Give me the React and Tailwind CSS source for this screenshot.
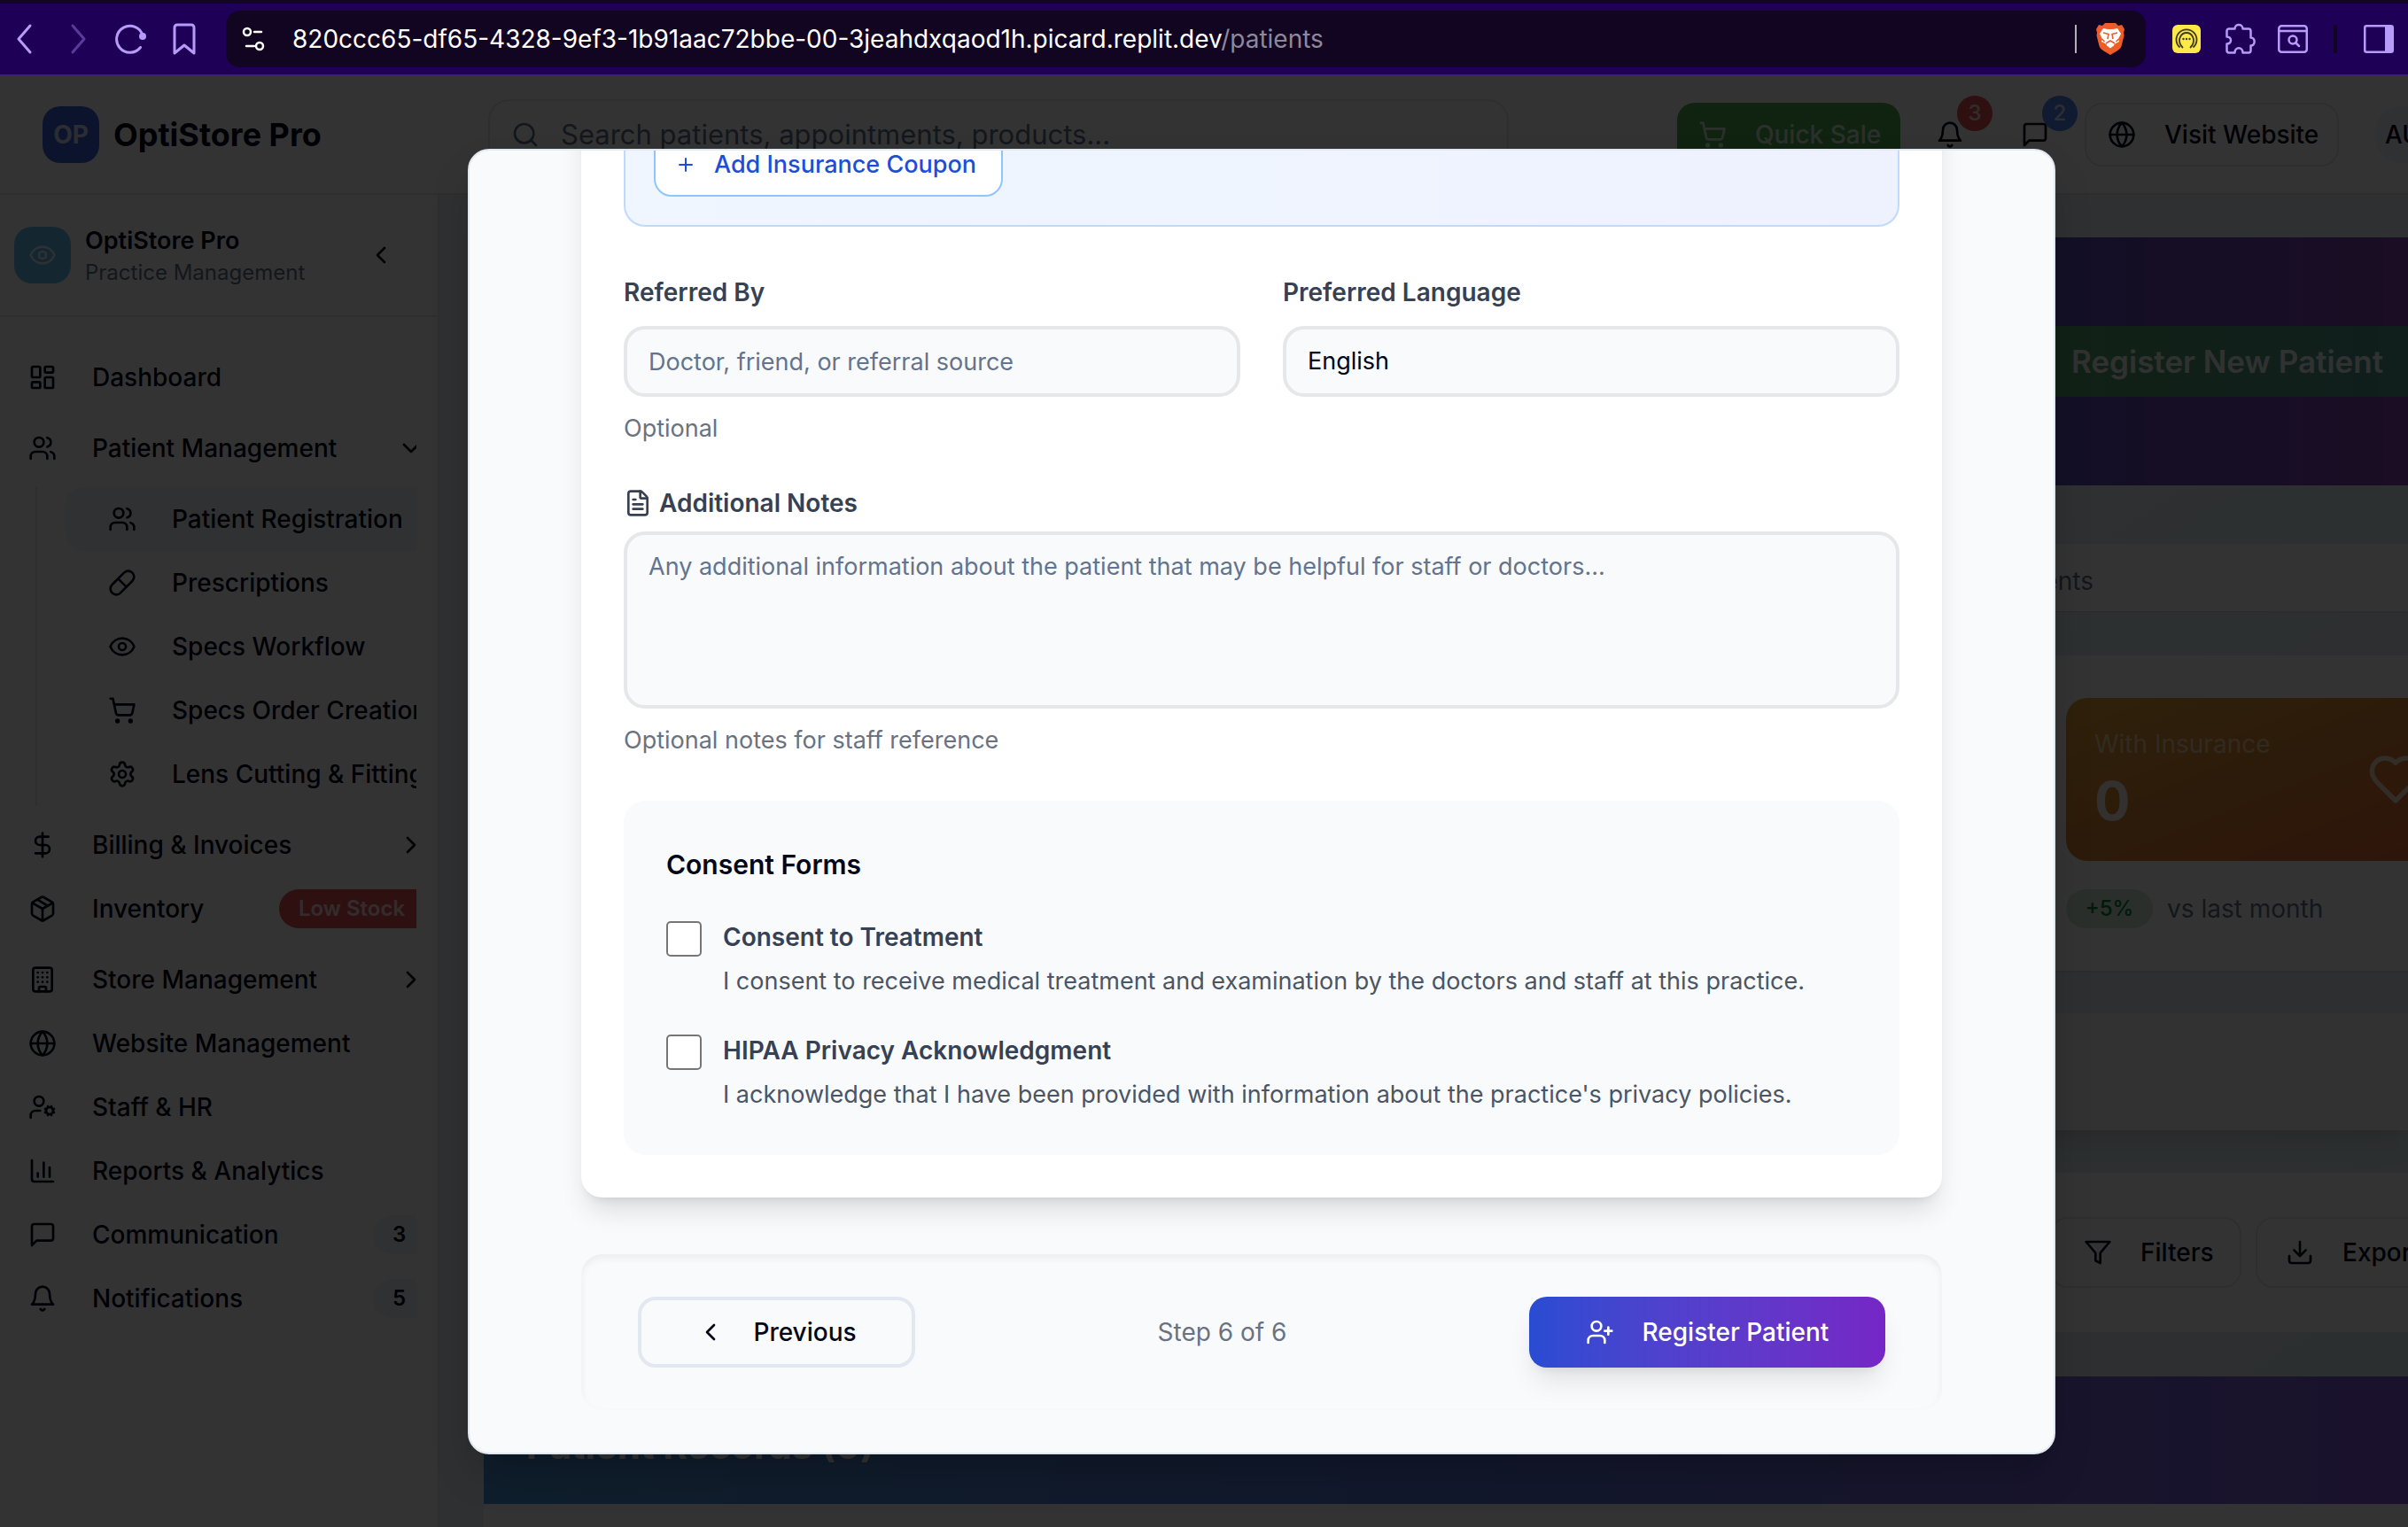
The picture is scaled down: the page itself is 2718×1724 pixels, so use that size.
import React from "react";
import {
  LayoutDashboard, Pill, Eye, ShoppingCart, Settings, DollarSign, Package, Building, Globe, UserCog,
  ChartColumn, ChevronLeft, ChevronRight, ChevronDown, Search, Plus, FileText, UserPlus,
} from "lucide-react";

function Svg({ className = "size-8", children, sw = 2 }) {
  return (
    <svg viewBox="0 0 24 24" fill="none" stroke="currentColor" strokeWidth={sw} strokeLinecap="round" strokeLinejoin="round" className={className} aria-hidden="true">
      {children}
    </svg>
  );
}
const Users = ({ className }) => (
  <Svg className={className}>
    <path d="M16 21v-2a4 4 0 0 0-4-4H6a4 4 0 0 0-4 4v2" />
    <circle cx="9" cy="7" r="4" />
    <path d="M22 21v-2a4 4 0 0 0-3-3.87" />
    <path d="M16 3.13a4 4 0 0 1 0 7.75" />
  </Svg>
);
const Bell = ({ className }) => (
  <Svg className={className}>
    <path d="M6 8a6 6 0 0 1 12 0c0 7 3 9 3 9H3s3-2 3-9" />
    <path d="M10.3 21a1.94 1.94 0 0 0 3.4 0" />
  </Svg>
);
const Message = ({ className }) => (
  <Svg className={className}>
    <path d="M21 15a2 2 0 0 1-2 2H7l-4 4V5a2 2 0 0 1 2-2h14a2 2 0 0 1 2 2z" />
  </Svg>
);
const Filter = ({ className }) => (
  <Svg className={className}>
    <polygon points="22 3 2 3 10 12.46 10 19 14 21 14 12.46 22 3" />
  </Svg>
);
const Download = ({ className }) => (
  <Svg className={className}>
    <path d="M21 15v4a2 2 0 0 1-2 2H5a2 2 0 0 1-2-2v-4" />
    <polyline points="7 10 12 15 17 10" />
    <line x1="12" x2="12" y1="15" y2="3" />
  </Svg>
);
const Heart = ({ className }) => (
  <Svg className={className}>
    <path d="M19 14c1.49-1.46 3-3.21 3-5.5A5.5 5.5 0 0 0 16.5 3c-1.76 0-3 .5-4.5 2-1.5-1.5-2.74-2-4.5-2A5.5 5.5 0 0 0 2 8.5c0 2.3 1.5 4.05 3 5.5l7 7Z" />
  </Svg>
);

function BrowserBar() {
  return (
    <div className="flex h-[86px] shrink-0 items-center border-t-4 border-b-2 border-t-[#110522] border-b-[#3f1d80] bg-[#1f0057] text-[#b69cf8]">
      <div className="flex w-[255px] shrink-0 items-center pl-3">
        <button aria-label="Back" className="w-[60px]">
          <svg viewBox="0 0 32 36" className="h-9 w-8" fill="none" stroke="currentColor" strokeWidth="3" strokeLinecap="round" strokeLinejoin="round"><path d="M22 3 9 18l13 15" /></svg>
        </button>
        <button aria-label="Forward" className="w-[58px] text-[#5b3a99]">
          <svg viewBox="0 0 32 36" className="h-9 w-8" fill="none" stroke="currentColor" strokeWidth="3" strokeLinecap="round" strokeLinejoin="round"><path d="M10 3 23 18 10 33" /></svg>
        </button>
        <button aria-label="Reload" className="w-16">
          <svg viewBox="0 0 36 36" className="size-9" fill="none" stroke="currentColor" strokeWidth="3" strokeLinecap="round"><path d="M28.500 27.500A15 15 0 1 1 31 14" /><circle cx="31" cy="15" r="4" fill="currentColor" stroke="none" /></svg>
        </button>
        <button aria-label="Bookmark">
          <svg viewBox="0 0 28 36" className="h-9 w-7" fill="none" stroke="currentColor" strokeWidth="3" strokeLinejoin="round"><path d="M3 5a3 3 0 0 1 3-3h16a3 3 0 0 1 3 3v29L14 25 3 34z" /></svg>
        </button>
      </div>
      <div className="flex h-16 min-w-0 flex-1 items-center rounded-2xl bg-[#110522] pr-6 pl-[18px] text-white">
        <svg viewBox="0 0 28 28" className="size-7 shrink-0" fill="none" stroke="currentColor" strokeWidth="2.5" strokeLinecap="round"><circle cx="6" cy="6" r="4" /><path d="M14 6h8M5 22h9" /><circle cx="20" cy="22" r="4" /></svg>
        <div className="ml-[29px] flex-1 text-[28px] whitespace-nowrap">
          820ccc65-df65-4328-9ef3-1b91aac72bbe-00-3jeahdxqaod1h.picard.replit.dev<span className="text-[#8f8899]">/patients</span>
        </div>
        <div className="mr-[22px] h-8 w-0.5 bg-[#b4b0ba]" />
        <svg viewBox="0 0 32 36" className="h-9 w-8 shrink-0">
          <path d="M10 0h12l3 3 4-1 3 5-1 4 .5 3-3 12c-1 3-3 4-5 5.500L16 36l-7.500-4.500c-2-1.500-4-2.500-5-5.500L.5 14 1 11 0 7l3-5 4 1z" fill="#ee5c28" />
          <path d="M8 6l5 1h6l5-1 4 6-3 6 1 3-4 2-6 5-6-5-4-2 1-3-3-6z" fill="#fff" />
          <path d="M8 11l6 1.500L13 18M24 11l-6 1.500L19 18M6.500 18l3 3M25.500 18l-3 3M11 23l5-3 5 3" stroke="#ee5c28" strokeWidth="1.600" fill="none" />
          <path d="M11.500 25l4.500-2.500 4.500 2.500-4.500 3.500z" fill="#fff" />
        </svg>
      </div>
      <div className="flex w-[296px] shrink-0 items-center overflow-hidden pl-[30px]">
        <svg viewBox="0 0 32 32" className="mr-[27px] size-8 shrink-0"><rect width="32" height="32" rx="6" fill="#fde94a" /><path d="M8.500 25.500A11.500 11.500 0 1 1 23.500 25.500M12 26C7 22 7.500 16 9 13.500 12 7.500 20 7.500 23 13.500 24.500 16 25 22 20 26" stroke="#3c3a20" strokeWidth="1.800" fill="none" /><g fill="#3c3a20"><circle cx="12.500" cy="16" r="1.200" /><circle cx="16" cy="16" r="1.200" /><circle cx="19.500" cy="16" r="1.200" /></g></svg>
        <svg viewBox="0 0 36 36" className="mr-6 size-9 shrink-0" fill="none" stroke="currentColor" strokeWidth="2.5" strokeLinejoin="round"><path d="M5 6.500h6.500c0-6 9-6 9 0H27a2.500 2.500 0 0 1 2.500 2.500v7.500c5.500 0 5.500 9 0 9V31a2.500 2.500 0 0 1-2.500 2.500h-6.500c0-7-9-7-9 0H5A2.500 2.500 0 0 1 2.500 31v-7.500c6 0 6-8 0-8V9A2.500 2.500 0 0 1 5 6.500z" /></svg>
        <svg viewBox="0 0 34 32" className="mr-[29px] h-8 w-[34px] shrink-0" fill="none" stroke="currentColor" strokeWidth="2.5"><rect x="1.250" y="1.250" width="31.500" height="29.500" rx="3" /><path d="M2 7h30" /><circle cx="17" cy="17" r="4.500" /><path d="M20 20l4 4" strokeLinecap="round" /></svg>
        <div className="mr-[30px] h-8 w-1 shrink-0 bg-[#110522]" />
        <svg viewBox="0 0 34 32" className="h-8 w-[34px] shrink-0" fill="none" stroke="currentColor" strokeWidth="2.5"><rect x="1.250" y="1.250" width="31.500" height="29.500" rx="2" /><path d="M24 2h8v28h-8z" fill="currentColor" stroke="none" /></svg>
        <div className="ml-4 h-16 w-2 shrink-0 rounded-l-lg bg-[#3f1d80]" />
      </div>
    </div>
  );
}

function TopHeader() {
  return (
    <header className="-mr-[26px] flex h-[134px] shrink-0 items-center border-b-2 border-gray-200 bg-white pl-12">
      <div className="flex w-[503px] shrink-0 items-center gap-4">
        <div className="grid size-16 place-items-center rounded-[20px] bg-[#3764dc] text-[28px] font-bold text-white/80">OP</div>
        <div className="text-[36px] font-bold text-slate-950">OptiStore Pro</div>
      </div>
      <label className="mr-[190px] flex h-20 min-w-0 flex-1 items-center gap-6 rounded-3xl border-2 border-gray-200 px-6 text-gray-500">
        <Search className="size-8 shrink-0 text-slate-500" />
        <input aria-label="Search" placeholder="Search patients, appointments, products..." className="w-full bg-transparent text-[31px] placeholder:text-slate-500" />
      </label>
      <div className="flex shrink-0 items-center text-[28px] font-medium text-slate-950">
        <button className="flex h-[72px] w-[252px] items-center gap-8 rounded-[20px] bg-[#4caf50] pl-6 whitespace-nowrap text-white/80">
          <ShoppingCart className="size-8 shrink-0" />Quick Sale
        </button>
        <button aria-label="Alerts" className="relative ml-10"><Bell className="size-8" />
          <span className="absolute -top-7 left-6 grid size-10 place-items-center rounded-full bg-[#e65055] text-2xl text-white/80">3</span>
        </button>
        <button aria-label="Messages" className="relative ml-16"><Message className="size-8" />
          <span className="absolute -top-7 left-6 grid size-10 place-items-center rounded-full bg-[#5082f0] text-2xl text-white/80">2</span>
        </button>
        <button className="ml-10 flex h-[72px] w-[287px] items-center gap-8 rounded-[20px] border-2 border-gray-200 pl-6 whitespace-nowrap">
          <Globe className="size-8 shrink-0" />Visit Website
        </button>
        <div className="ml-10 grid size-16 place-items-center rounded-full bg-slate-100">AU</div>
      </div>
    </header>
  );
}

function NavItem({ icon: Icon, label, end, badge, danger, space }) {
  return (
    <a href="#nav" className={"flex h-[72px] shrink-0 items-center pl-8 text-[28px] font-medium whitespace-nowrap " + (space ? "mb-2" : "")}>
      <Icon className="size-8 shrink-0" />
      <span className="ml-10 flex-1">{label}</span>
      {end && React.createElement(end, { className: "-mr-[10px] size-8 shrink-0" })}
      {badge && (
        <span className={"flex h-11 shrink-0 items-center rounded-l-full text-2xl font-semibold " + (danger ? "w-[155px] bg-[#e65055] pl-[22px] text-white/80" : "w-[49px] bg-slate-100 pl-[22px]")}>{badge}</span>
      )}
    </a>
  );
}
function SubItem({ icon: Icon, label, active }) {
  return (
    <a href="#nav" className={"flex h-[72px] items-center rounded-l-[20px] pl-12 text-[28px] font-medium whitespace-nowrap " + (active ? "bg-slate-100" : "")}>
      <Icon className="size-8 shrink-0" />
      <span className="ml-10">{label}</span>
    </a>
  );
}

function Sidebar() {
  return (
    <aside className="flex w-[496px] shrink-0 flex-col border-r-2 border-gray-200 bg-white text-slate-950">
      <div className="flex h-[138px] shrink-0 items-center border-b-2 border-gray-200 pl-4">
        <div className="grid size-16 place-items-center rounded-[20px] bg-[#64bef0] text-white/80"><Eye className="size-8" /></div>
        <div className="ml-4 flex-1 pt-1">
          <div className="text-[27px] leading-9 font-semibold">OptiStore Pro</div>
          <div className="text-2xl leading-9 text-slate-500">Practice Management</div>
        </div>
        <button aria-label="Collapse" className="mr-12"><ChevronLeft className="size-8" /></button>
      </div>
      <nav className="mr-6 flex flex-col overflow-hidden pt-8">
        <NavItem icon={LayoutDashboard} label="Dashboard" space />
        <NavItem icon={Users} label="Patient Management" end={ChevronDown} space />
        <div className="mb-2 ml-10 border-l-2 border-gray-200 pl-8">
          <SubItem icon={Users} label="Patient Registration" active />
          <SubItem icon={Pill} label="Prescriptions" />
          <SubItem icon={Eye} label="Specs Workflow" />
          <SubItem icon={ShoppingCart} label="Specs Order Creation" />
          <SubItem icon={Settings} label="Lens Cutting & Fitting" />
        </div>
        <NavItem icon={DollarSign} label="Billing & Invoices" end={ChevronRight} />
        <NavItem icon={Package} label="Inventory" badge="Low Stock" danger space />
        <NavItem icon={Building} label="Store Management" end={ChevronRight} />
        <NavItem icon={Globe} label="Website Management" />
        <NavItem icon={UserCog} label="Staff & HR" />
        <NavItem icon={ChartColumn} label="Reports & Analytics" />
        <NavItem icon={Message} label="Communication" badge="3" />
        <NavItem icon={Bell} label="Notifications" badge="5" />
      </nav>
    </aside>
  );
}

function PageContent() {
  return (
    <main className="min-w-0 flex-1 overflow-hidden bg-gradient-to-br from-[#ebf0fa] to-[#dcebf0] pt-12 pl-[50px] text-[28px]">
      <section className="flex h-[280px] items-center justify-end bg-gradient-to-r from-blue-600 via-[#5a4bbe] via-80% to-[#8241b4]">
        <button className="h-20 w-[420px] bg-gradient-to-r from-[#55a569] to-[#50968c] pl-10 text-left text-[35px] font-semibold whitespace-nowrap text-white/90">Register New Patient</button>
      </section>
      <div className="mt-[66px] flex h-[76px] items-center justify-end bg-white pt-2 pr-[355px] text-slate-500 shadow-sm">Patients</div>
      <section className="mt-[50px] flex h-[356px] flex-col items-end bg-white pt-12 shadow-sm">
        <div className="w-[386px]">
          <div className="flex h-[184px] w-[462px] items-center justify-between rounded-3xl bg-gradient-to-br from-[#e6a53c] via-[#dc8232] to-[#e66432] pr-[58px] pl-8">
            <div>
              <div className="leading-10 text-orange-100/70">With Insurance</div>
              <div className="mt-2 text-[60px] leading-[72px] font-bold text-white/90">0</div>
            </div>
            <Heart className="size-16 text-orange-100/90" />
          </div>
          <div className="mt-8 flex items-center gap-4 whitespace-nowrap text-slate-500">
            <span className="grid h-11 w-[98px] place-items-center rounded-full bg-[#d2ebdc] text-2xl font-medium text-green-700">+5%</span>
            vs last month
          </div>
        </div>
      </section>
      <section className="mt-12 h-[132px] bg-[#fafafc] shadow-[0_20px_30px_-6px_rgba(0,0,0,0.1),0_8px_12px_-8px_rgba(0,0,0,0.1)]" />
      <section className="mt-12 flex h-[180px] items-center justify-end bg-white text-slate-950">
        <div className="flex w-[404px] shrink-0 gap-4 font-medium">
          <button className="flex h-20 w-[216px] shrink-0 items-center gap-8 rounded-[20px] border-2 border-gray-200 pl-9"><Filter className="size-8" />Filters</button>
          <button className="flex h-20 w-[216px] shrink-0 items-center gap-8 rounded-[20px] border-2 border-gray-200 pl-8"><Download className="size-8" />Export</button>
        </div>
      </section>
      <section className="mt-[50px] bg-white">
        <h2 className="h-36 bg-gradient-to-r from-[#4b96dc] via-[#5a78dc] to-[#825adc] pt-12 pl-12 text-[42px] leading-[60px] font-bold text-white">Patient Records (0)</h2>
        <div className="h-12" />
      </section>
    </main>
  );
}

function Consent({ id, title, text }) {
  return (
    <div className="flex gap-6">
      <input id={id} type="checkbox" className="size-10 shrink-0 appearance-none rounded-[5px] border-2 border-[#767676] bg-white" />
      <div>
        <label htmlFor={id} className="block text-[28px] leading-9 font-semibold text-gray-700">{title}</label>
        <p className="mt-3 text-[27px] leading-10 text-gray-600">{text}</p>
      </div>
    </div>
  );
}

function RegistrationDialog() {
  const field = "block w-full rounded-3xl border-4 border-gray-200 bg-gray-50 px-6 text-[27px]";
  return (
    <div role="dialog" aria-label="Register patient" className="flex min-w-0 flex-1 flex-col justify-end overflow-hidden rounded-3xl border-2 border-slate-200 bg-slate-50 px-[126px] pb-12 text-[28px] text-slate-950 shadow-2xl">
      <div className="rounded-3xl bg-white p-12 shadow-[0_20px_30px_-6px_rgba(0,0,0,0.12),0_8px_12px_-8px_rgba(0,0,0,0.12)]">
        <div className="rounded-3xl border-2 border-blue-200 bg-gradient-to-r from-blue-50 to-indigo-50 px-8 pt-20 pb-8">
          <button className="flex h-[72px] w-[394px] items-center gap-5 rounded-[20px] border-2 border-blue-300 bg-white pl-[22px] text-[27px] font-medium whitespace-nowrap text-[#1d4ed8]"><Plus className="size-6 shrink-0" />Add Insurance Coupon</button>
        </div>
        <div className="mt-14 grid grid-cols-2 gap-12">
          <div>
            <label htmlFor="ref" className="block leading-9 font-semibold text-gray-700">Referred By</label>
            <input id="ref" placeholder="Doctor, friend, or referral source" className={field + " mt-5 h-20 placeholder:text-slate-500"} />
            <p className="mt-4 text-[27px] leading-10 text-gray-500">Optional</p>
          </div>
          <div>
            <label htmlFor="lang" className="block leading-9 font-semibold text-gray-700">Preferred Language</label>
            <select id="lang" className={field + " mt-5 h-20 appearance-none"}><option>English</option></select>
          </div>
        </div>
        <label htmlFor="notes" className="mt-12 flex items-center gap-2 leading-8 font-semibold text-gray-700"><FileText className="size-8" />Additional Notes</label>
        <textarea id="notes" placeholder="Any additional information about the patient that may be helpful for staff or doctors..." className={field + " mt-4 h-[200px] resize-none py-4 leading-10 placeholder:text-slate-500"} />
        <p className="mt-4 text-[27px] leading-10 text-gray-500">Optional notes for staff reference</p>
        <section className="mt-12 flex flex-col gap-10 rounded-3xl bg-gray-50 p-12">
          <h3 className="text-[30px] leading-[48px] font-semibold">Consent Forms</h3>
          <Consent id="treat" title="Consent to Treatment" text="I consent to receive medical treatment and examination by the doctors and staff at this practice." />
          <Consent id="hipaa" title="HIPAA Privacy Acknowledgment" text="I acknowledge that I have been provided with information about the practice's privacy policies." />
        </section>
      </div>
      <footer className="mt-16 flex items-center justify-between rounded-3xl px-16 py-12 shadow-[inset_0_4px_8px_rgba(0,0,0,0.06)]">
        <button className="flex h-20 w-[313px] items-center justify-center gap-8 rounded-[20px] border-4 border-slate-200 bg-slate-50 font-medium"><ChevronLeft className="size-8" />Previous</button>
        <span className="text-gray-500">Step 6 of 6</span>
        <button className="flex h-20 w-[402px] items-center justify-center gap-8 rounded-[20px] bg-gradient-to-r from-[#284cd2] to-[#7526c6] font-medium text-white shadow-[0_20px_30px_-6px_rgba(0,0,0,0.1),0_8px_12px_-8px_rgba(0,0,0,0.1)]"><UserPlus className="size-8" />Register Patient</button>
      </footer>
    </div>
  );
}

export default function App() {
  return (
    <div className="flex h-screen flex-col overflow-hidden font-['Inter',sans-serif]">
      <BrowserBar />
      <div className="relative flex min-h-0 flex-1 flex-col overflow-hidden">
        <TopHeader />
        <div className="flex min-h-0 flex-1">
          <Sidebar />
          <PageContent />
        </div>
        <div className="absolute inset-0 flex bg-black/80 py-[82px] pr-[398px] pl-[528px]">
          <RegistrationDialog />
        </div>
      </div>
    </div>
  );
}
